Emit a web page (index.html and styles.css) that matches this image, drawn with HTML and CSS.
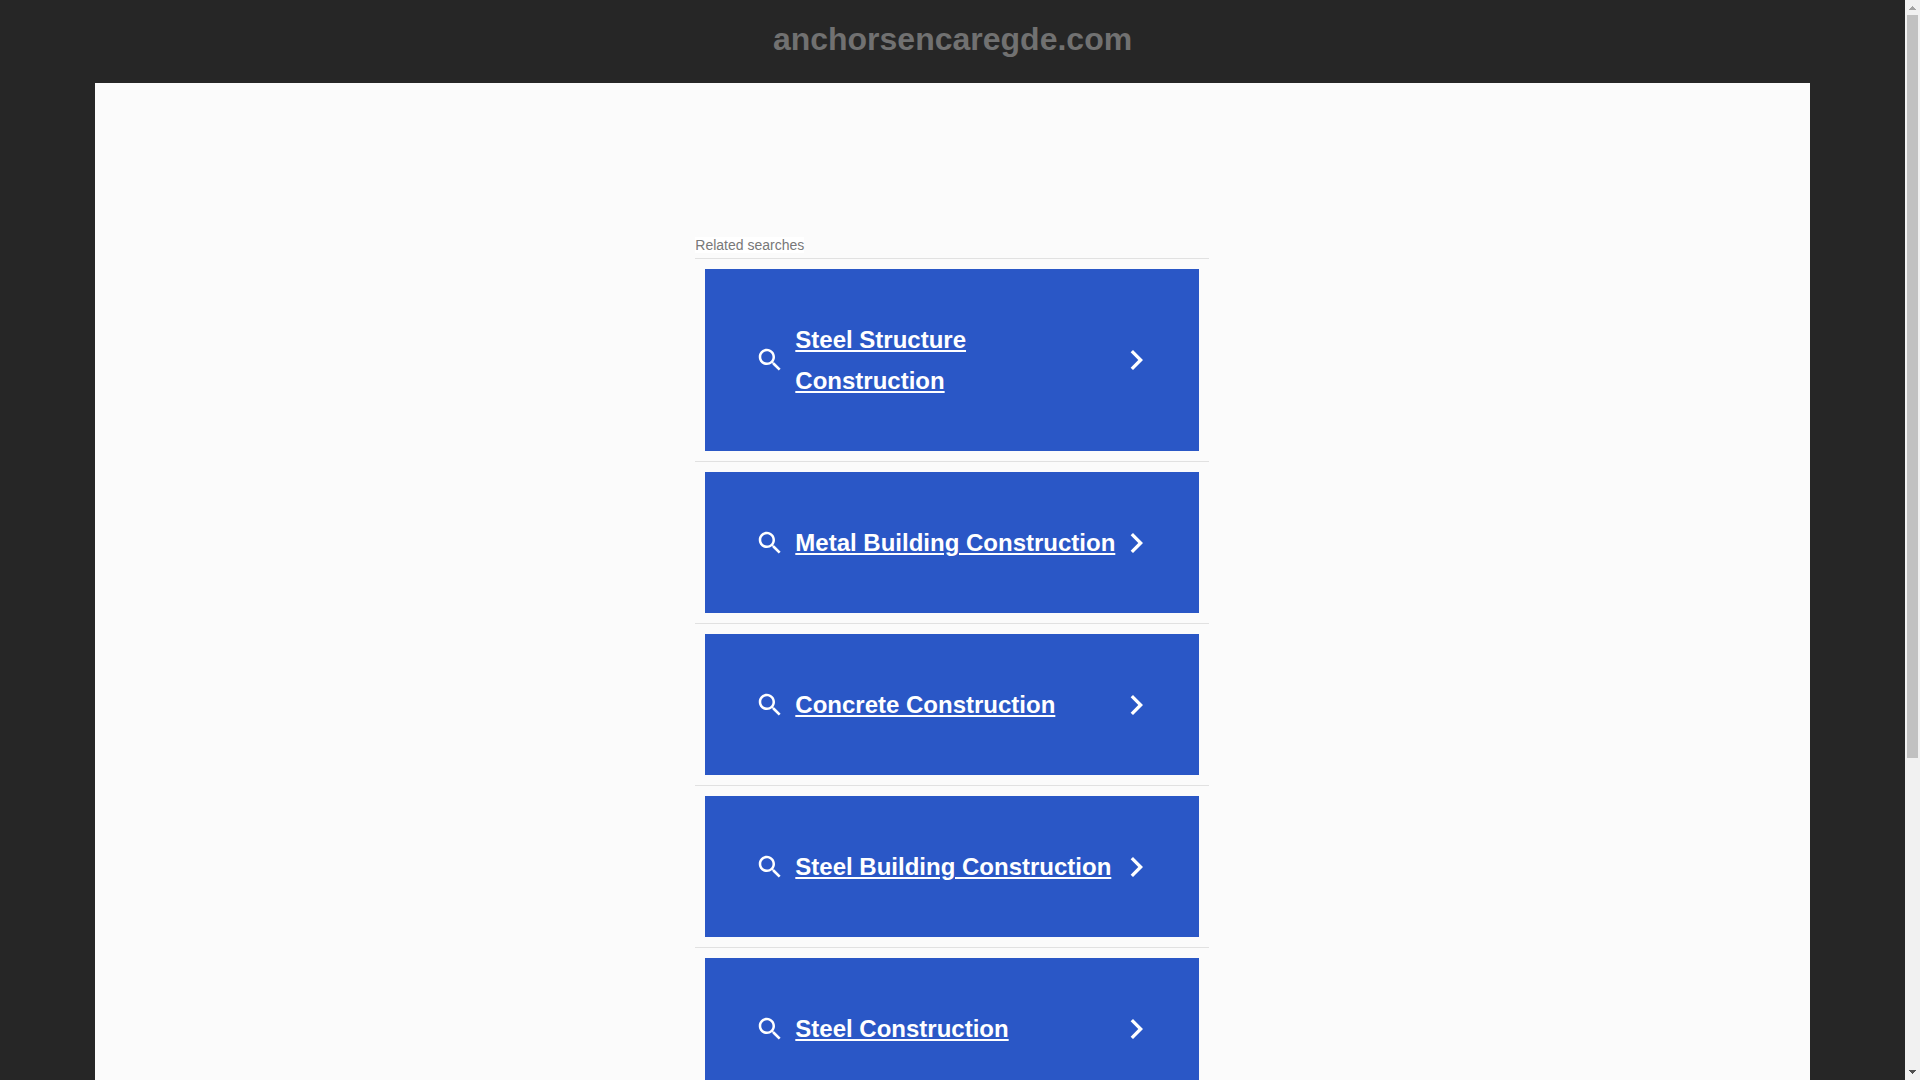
FILE: index.html
```html
<!DOCTYPE html>
<html lang="en">
<head>
	<meta charset="utf-8">
	<title>anchorsencaregde.com</title>
	<link rel="stylesheet" href="styles.css">
</head>

<body>

	<!-- shared icons -->
	<svg class="sprite" aria-hidden="true">
		<symbol id="search" viewBox="0 0 24 24">
			<path d="M15.5 14h-.79l-.28-.27C15.41 12.59 16 11.11 16 9.5 16 5.91 13.09 3 9.5 3S3 5.91 3 9.5 5.91 16 9.5 16c1.61 0 3.09-.59 4.23-1.57l.27.28v.79l5 4.99L20.49 19l-4.99-5zm-6 0C7.01 14 5 11.99 5 9.5S7.01 5 9.5 5 14 7.01 14 9.5 11.99 14 9.5 14z"/>
		</symbol>
		<symbol id="chevron" viewBox="0 0 30 30">
			<path d="M14 5l-2.35 2.35L19.3 15l-7.65 7.65L14 25l10-10z"/>
		</symbol>
	</svg>

	<div class="page">
		<header>
			<h1>anchorsencaregde.com</h1>
		</header>

		<main>
			<div class="related">
				<h2><span>Related searches</span></h2>
				<ul>
					<li>
						<a href="#">
							<svg class="icon"><use href="#search"/></svg>
							<span class="title">Steel Structure Construction</span>
							<svg class="icon"><use href="#chevron"/></svg>
						</a>
					</li>
					<li>
						<a href="#">
							<svg class="icon"><use href="#search"/></svg>
							<span class="title">Metal Building Construction</span>
							<svg class="icon"><use href="#chevron"/></svg>
						</a>
					</li>
					<li>
						<a href="#">
							<svg class="icon"><use href="#search"/></svg>
							<span class="title">Concrete Construction</span>
							<svg class="icon"><use href="#chevron"/></svg>
						</a>
					</li>
					<li>
						<a href="#">
							<svg class="icon"><use href="#search"/></svg>
							<span class="title">Steel Building Construction</span>
							<svg class="icon"><use href="#chevron"/></svg>
						</a>
					</li>
					<li>
						<a href="#">
							<svg class="icon"><use href="#search"/></svg>
							<span class="title">Steel Construction</span>
							<svg class="icon"><use href="#chevron"/></svg>
						</a>
					</li>
				</ul>
			</div>
		</main>
	</div>

	<div class="scrollbar" aria-hidden="true">
		<svg class="arrow" viewBox="0 0 15 15" shape-rendering="crispEdges"><path fill="#a3a3a3" d="M7 6h1v1h1v1h1v1h1v1H4V9h1V8h1V7h1z"/></svg>
		<div class="track"><div class="thumb"></div></div>
		<svg class="arrow" viewBox="0 0 15 15" shape-rendering="crispEdges"><path fill="#505050" d="M4 5h7v1h-1v1H9v1H8v1H7V8H6V7H5V6H4z"/></svg>
	</div>

</body>
</html>
```
FILE: styles.css
```css
* {
	box-sizing: border-box;
}

body {
	display: flex;
	height: 100vh;
	margin: 0;
	overflow: hidden;
	background: #262626;
	font-family: Arial, "Liberation Sans", sans-serif;
}

h1, h2, ul {
	margin: 0;
	padding: 0;
}

.sprite {
	display: none;
}

.page {
	flex: 1;
	overflow-y: auto;
	scrollbar-width: none;
}

header {
	padding: 21px 0 25px;
	text-align: center;
}

h1 {
	color: #717171;
	font-size: 32px;
	line-height: 37px;
}

main {
	width: 90%;
	min-height: 100vh;
	margin: 0 auto;
	padding: 150px 0 200px;
	background: #fbfbfb;
}

/* ----------- Related searches ----------- */
.related {
	width: 30%;
	min-width: 400px;
	max-width: 514px;
	margin-left: 35%;
}

.related h2 {
	padding: 4px 0 5px;
	color: #787878;
	font-size: 14px;
	font-weight: normal;
	line-height: 16px;
}

.related h2 span {
	background: #fff;
}

.related ul {
	list-style: none;
}

.related li {
	padding: 10px;
	border-top: 1px solid #e1e1e1;
}

.related a {
	display: flex;
	align-items: center;
	gap: 10px;
	padding: 50px;
	background: #2a57c6;
	color: #fff;
	font-size: 24px;
	font-weight: bold;
	line-height: 41px;
}

.title {
	flex: 1;
	margin-right: -10px;
}

.icon {
	flex: none;
	width: 30px;
	height: 30px;
	fill: #fff;
}

/* ----------- Scrollbar ----------- */
.scrollbar {
	display: flex;
	flex-direction: column;
	width: 15px;
	background: #f1f1f1;
}

.arrow {
	display: block;
	width: 15px;
	height: 15px;
}

.track {
	flex: 1;
	padding: 0 2px;
}

.thumb {
	height: 70.8%;
	background: #c1c1c1;
}
```
